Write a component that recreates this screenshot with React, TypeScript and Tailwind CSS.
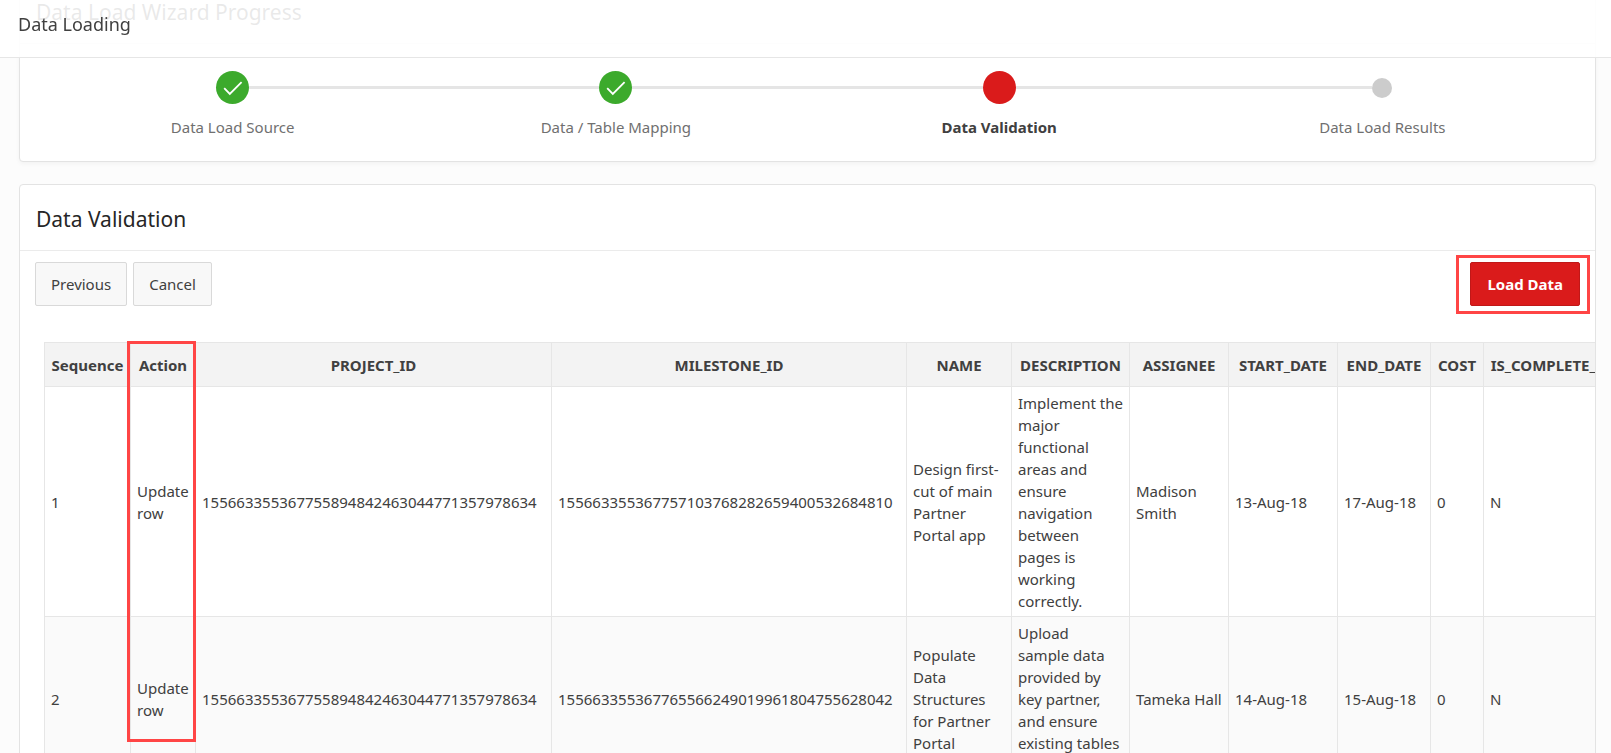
const steps = [
  { label: 'Data Load Source', status: 'done' },
  { label: 'Data / Table Mapping', status: 'done' },
  { label: 'Data Validation', status: 'current' },
  { label: 'Data Load Results', status: 'pending' },
]

const columns = [
  { name: 'Sequence', width: 'w-[86px]' },
  { name: 'Action', width: 'w-[65px]' },
  { name: 'PROJECT_ID', width: 'w-[356px]' },
  { name: 'MILESTONE_ID', width: 'w-[355px]' },
  { name: 'NAME', width: 'w-[105px]' },
  { name: 'DESCRIPTION', width: 'w-[118px]' },
  { name: 'ASSIGNEE', width: 'w-[99px]' },
  { name: 'START_DATE', width: 'w-[109px]' },
  { name: 'END_DATE', width: 'w-[93px]' },
  { name: 'COST', width: 'w-[53px]' },
  { name: 'IS_COMPLETE_YN', width: 'w-[141px]' },
]

const rows = [
  [
    '1',
    'Update row',
    '155663355367755894842463044771357978634',
    '155663355367757103768282659400532684810',
    'Design first-cut of main Partner Portal app',
    'Implement the major functional areas and ensure navigation between pages is working correctly.',
    'Madison Smith',
    '13-Aug-18',
    '17-Aug-18',
    '0',
    'N',
  ],
  [
    '2',
    'Update row',
    '155663355367755894842463044771357978634',
    '155663355367765566249019961804755628042',
    'Populate Data Structures for Partner Portal',
    'Upload sample data provided by key partner, and ensure existing tables are correct.',
    'Tameka Hall',
    '14-Aug-18',
    '15-Aug-18',
    '0',
    'N',
  ],
]

function StepMarker({ status }: { status: string }) {
  if (status === 'done') {
    return (
      <span className="flex size-[33px] items-center justify-center rounded-full bg-[#3caa2c] text-white">
        <svg className="size-5" viewBox="0 0 20 20" fill="none" stroke="currentColor" strokeWidth={1.8}>
          <path d="M1.2 10.2L6.8 16L18.6 4.2" />
        </svg>
      </span>
    )
  }
  if (status === 'current') {
    return <span className="size-[33px] rounded-full bg-[#da1b1b]" />
  }
  return <span className="size-5 rounded-full bg-[#cccccc]" />
}

export default function App() {
  return (
    <div className="h-screen overflow-hidden bg-[#fcfcfc] font-['Noto_Sans',sans-serif] text-[15px] leading-[22px] text-[#404040]">
      <header className="fixed inset-x-0 top-0 z-10 flex h-[58px] items-center border-b border-[#e6e6e6] bg-white/90 px-[18px] pb-2.5">
        <h1 className="text-lg leading-6">Data Loading</h1>
      </header>

      {/* The page is scrolled a little, so the first region slides under the header */}
      <main className="-mt-[23px] flex flex-col gap-[22px] pl-[19px] pr-[15px]">
        <section className="rounded-sm border border-[#e3e3e3] bg-white shadow-[0_2px_4px_rgba(0,0,0,0.04)]">
          <div className="flex h-[66px] items-center border-b border-[#ebebeb] px-4 pt-0.5">
            <h2 className="text-[21px] leading-7 text-[#262626]">Data Load Wizard Progress</h2>
          </div>
          <ol className="flex px-[21px] pb-[23px] pt-[27px]">
            {steps.map((step, i) => (
              <li key={step.label} className="flex flex-1 flex-col items-center gap-3">
                <div className="flex h-[33px] w-full items-center">
                  <span className={`h-[3px] flex-1 ${i > 0 ? 'bg-[#e5e5e5]' : ''}`} />
                  <StepMarker status={step.status} />
                  <span className={`h-[3px] flex-1 ${i < steps.length - 1 ? 'bg-[#e5e5e5]' : ''}`} />
                </div>
                <span className={step.status === 'current' ? 'font-bold' : 'text-[#707070]'}>{step.label}</span>
              </li>
            ))}
          </ol>
        </section>

        <section className="rounded-sm border border-[#e3e3e3] bg-white">
          <div className="flex h-[66px] items-center border-b border-[#ebebeb] px-4 pt-0.5">
            <h2 className="text-[21px] leading-7 text-[#262626]">Data Validation</h2>
          </div>

          <div className="flex items-center gap-1.5 px-[15px] pt-[11px]">
            <button type="button" className="h-11 rounded-xs border border-[#d9d9d9] bg-[#f8f8f8] px-[15px]">
              Previous
            </button>
            <button type="button" className="h-11 rounded-xs border border-[#d9d9d9] bg-[#f8f8f8] px-[15px]">
              Cancel
            </button>
            <div className="relative ml-auto">
              <button
                type="button"
                className="h-11 rounded-xs border border-[#c01818] bg-[#da1b1b] px-4 font-bold text-white"
              >
                Load Data
              </button>
              <span className="pointer-events-none absolute -bottom-2 -left-3.5 -right-2.5 -top-[7px] border-3 border-[#ff4545]" />
            </div>
          </div>

          <div className="-mt-1 overflow-hidden pl-6 pt-10">
            <table className="w-[1580px] table-fixed border-collapse">
              <thead>
                <tr className="h-11 bg-[#f3f3f3]">
                  {columns.map((col) => (
                    <th
                      key={col.name}
                      scope="col"
                      className={`relative whitespace-nowrap border border-[#e6e6e6] px-1 text-center font-bold ${col.width}`}
                    >
                      {col.name}
                      {col.name === 'Action' && (
                        <span className="pointer-events-none absolute -left-1 -right-px -top-0.5 z-[1] h-[401px] border-3 border-[#ff4545]" />
                      )}
                    </th>
                  ))}
                </tr>
              </thead>
              <tbody>
                {rows.map((row) => (
                  <tr key={row[0]} className="even:bg-[#fafafa]">
                    {row.map((cell, i) => (
                      <td key={columns[i].name} className="border border-[#e6e6e6] px-1.5 pb-1 pt-[5px] align-middle">
                        {cell}
                      </td>
                    ))}
                  </tr>
                ))}
              </tbody>
            </table>
          </div>
        </section>
      </main>
    </div>
  )
}
